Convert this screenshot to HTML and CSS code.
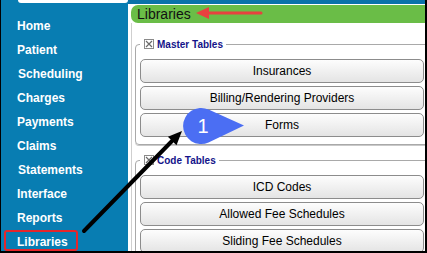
FILE: index.html
```html
<!DOCTYPE html>
<html>
<head>
<meta charset="utf-8">
<link rel="stylesheet" href="styles.css">
</head>
<body>
<div class="frame">
  <nav class="sidebar">
    <div class="tab"></div>
    <ul class="menu">
      <li>Home</li>
      <li>Patient</li>
      <li class="ind">Scheduling</li>
      <li>Charges</li>
      <li>Payments</li>
      <li>Claims</li>
      <li class="ind">Statements</li>
      <li>Interface</li>
      <li>Reports</li>
      <li class="active">Libraries<span class="hl"></span></li>
    </ul>
  </nav>
  <main class="main">
    <div class="title">Libraries</div>
    <div class="panel">
      <fieldset class="group">
        <legend><svg class="cb" width="10" height="10" viewBox="0 0 10 10"><rect x="0.5" y="0.5" width="9" height="9" fill="#fff" stroke="#8a8a8a"/><path d="M2 2L8 8M8 2L2 8" stroke="#6a6a6a" stroke-width="1.2"/></svg><span>Master Tables</span></legend>
        <button class="btn">Insurances</button>
        <button class="btn">Billing/Rendering Providers</button>
        <button class="btn">Forms</button>
      </fieldset>
      <fieldset class="group">
        <legend><svg class="cb" width="10" height="10" viewBox="0 0 10 10"><rect x="0.5" y="0.5" width="9" height="9" fill="#fff" stroke="#8a8a8a"/><path d="M2 2L8 8M8 2L2 8" stroke="#6a6a6a" stroke-width="1.2"/></svg><span>Code Tables</span></legend>
        <button class="btn">ICD Codes</button>
        <button class="btn">Allowed Fee Schedules</button>
        <button class="btn">Sliding Fee Schedules</button>
      </fieldset>
    </div>
  </main>
  <svg class="notes" width="427" height="253" viewBox="0 0 427 253">
    <line x1="261" y1="13" x2="206" y2="13" stroke="#e8413f" stroke-width="3" stroke-linecap="round"/>
    <polygon points="196,13 209,7 209,19" fill="#e8413f"/>
    <line x1="84" y1="231" x2="172" y2="141" stroke="#000" stroke-width="4" stroke-linecap="round"/>
    <polygon points="182,131 176.5,145.2 167.9,136.8" fill="#000"/>
    <path d="M208.5 109.6 L244 125.5 L208.5 142.4 A18 18 0 1 1 208.5 109.6 Z" fill="#4b6ef3"/>
    <text x="203" y="133" font-family="Liberation Sans, Arial, sans-serif" font-size="20" fill="#fff" text-anchor="middle">1</text>
  </svg>
</div>
</body>
</html>
```
FILE: styles.css
```css
html, body {
  margin: 0;
  padding: 0;
  background: #fff;
}
.frame {
  position: relative;
  width: 427px;
  height: 253px;
  box-sizing: border-box;
  border-left: 1px solid #000;
  border-right: 2px solid #000;
  border-bottom: 2px solid #000;
  overflow: hidden;
  display: flex;
  font-family: "Liberation Sans", Arial, sans-serif;
}
.sidebar {
  width: 127px;
  flex: none;
  background: #087db2;
}
.tab {
  height: 3px;
  margin-left: 17px;
  background: #fff;
  border-radius: 0 0 6px 6px;
}
.menu {
  list-style: none;
  margin: 0;
  padding: 11px 0 0 16px;
}
.menu li {
  position: relative;
  height: 24px;
  line-height: 24px;
  color: #fff;
  font-weight: bold;
  font-size: 12px;
}
.menu li.ind {
  padding-left: 1px;
}
.hl {
  position: absolute;
  left: -13px;
  top: 0;
  width: 74px;
  height: 21px;
  box-sizing: border-box;
  border: 2px solid #e5262b;
  border-radius: 3px;
}
.main {
  flex: 1;
  min-width: 0;
  border-top: 4px solid #0a72a9;
  padding-top: 1px;
  background: #fff;
}
.title {
  margin-left: 3px;
  height: 18px;
  line-height: 18px;
  padding-left: 6px;
  background: #6abd47;
  border-radius: 7px 0 0 7px;
  font-size: 14px;
  color: #111;
}
.panel {
  margin-left: 3px;
  border-left: 1px solid #cfcfcf;
  padding: 15px 0 0 3px;
  height: 240px;
}
.group {
  margin: 0 -8px 9px 0;
  padding: 9px 8px 7px 4px;
  border: 1px solid #a9a9a9;
  border-radius: 4px;
  box-shadow: 0 1px 0 #c9c9c9;
  display: flex;
  flex-direction: column;
  gap: 3px;
}
.group legend {
  padding: 0 3px 0 4px;
  height: 12px;
  display: flex;
  align-items: center;
  gap: 3px;
  font-size: 10px;
  font-weight: bold;
  color: #14148a;
}
.cb {
  display: block;
}
.btn {
  height: 24px;
  width: 100%;
  margin: 0;
  padding: 0;
  border: 1px solid #8c8c8c;
  border-radius: 5px;
  background: linear-gradient(#fdfdfd, #e4e4e4);
  font-family: "Liberation Sans", Arial, sans-serif;
  font-size: 12px;
  color: #000;
  text-align: center;
}
.notes {
  position: absolute;
  left: -1px;
  top: 0;
  pointer-events: none;
}
```
